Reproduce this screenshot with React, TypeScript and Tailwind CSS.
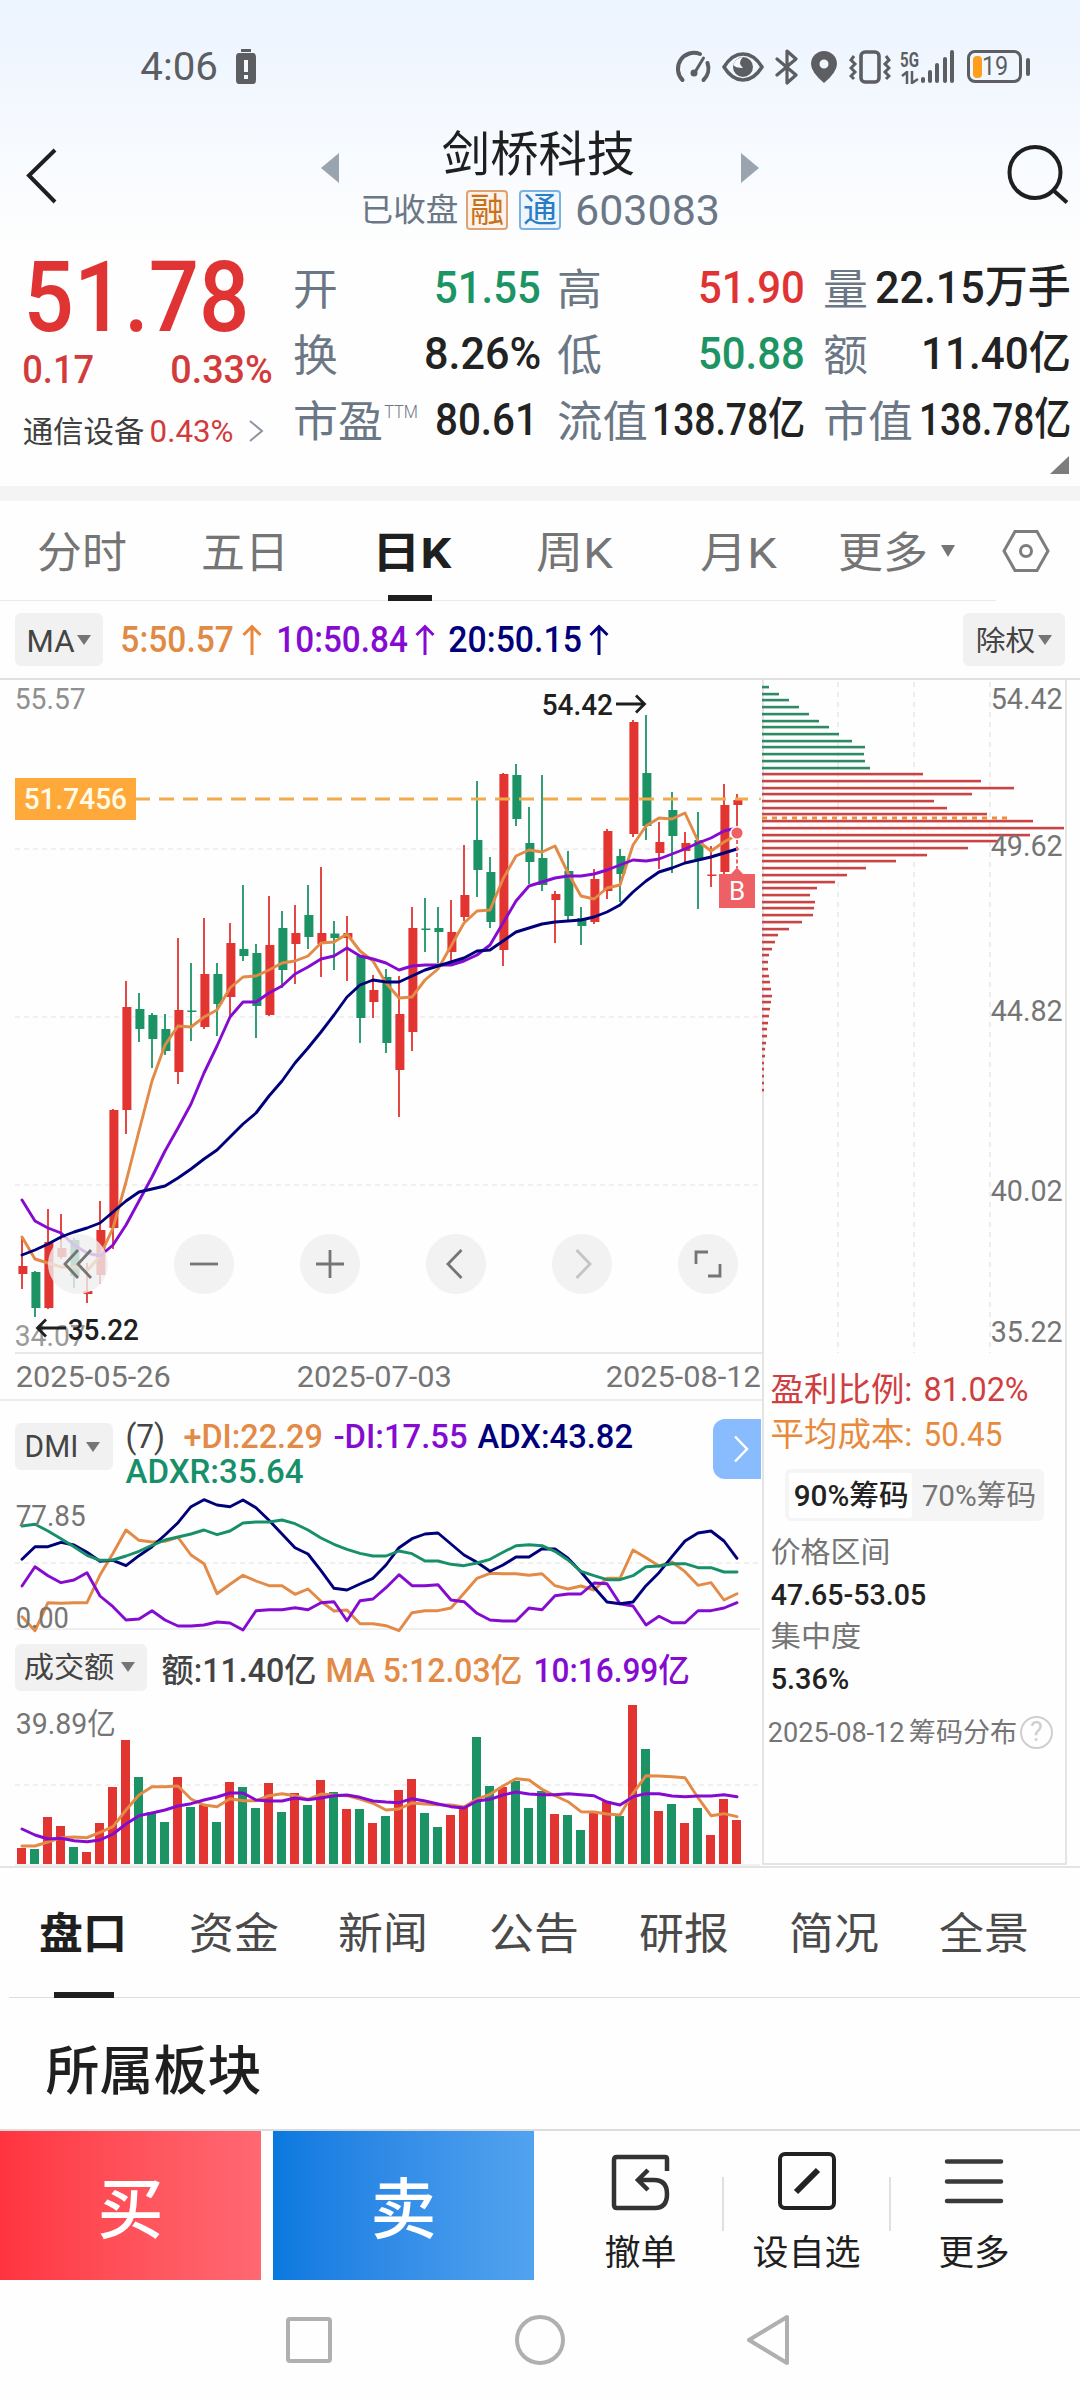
import { useLayoutEffect, useRef, type ReactNode } from "react";

/** Single line of text condensed or widened so that its ink fills the box width given in className. */
function Fit({ className, children }: { className: string; children: ReactNode }) {
  const box = useRef<HTMLSpanElement>(null);
  const ink = useRef<HTMLSpanElement>(null);
  useLayoutEffect(() => {
    if (!box.current || !ink.current) return;
    const size = parseFloat(getComputedStyle(ink.current).fontSize);
    const bearing = size * 0.045;
    const k = (box.current.clientWidth + bearing * 2) / ink.current.offsetWidth;
    ink.current.style.transform = `translateX(${-bearing}px) scaleX(${k})`;
  }, []);
  return (
    <span ref={box} className={"block shrink-0 leading-none whitespace-nowrap " + className}>
      <span ref={ink} className="inline-block origin-left">{children}</span>
    </span>
  );
}

function Caret({ className }: { className: string }) {
  return (
    <svg viewBox="0 0 14 11" preserveAspectRatio="none" className={"shrink-0 " + className}>
      <path d="M0 0H14L7 11Z" fill="#757575" />
    </svg>
  );
}

function StatusBar() {
  return (
    <div className="flex h-[133px] items-center text-[#5c5e62]">
      <Fit className="ml-[142px] w-[74px] pt-[2px] text-[39px]">4:06</Fit>
      <svg viewBox="0 0 22 36" className="ml-[19px] h-9 w-[22px] shrink-0">
        <path d="M6 0H16V3H6ZM4 4H18Q21 4 21 8V31Q21 35 18 35H4Q1 35 1 31V8Q1 4 4 4Z" fill="#5c5e62" />
        <path d="M9 11H13V23H9ZM9 26H13V30H9Z" fill="#f4f8ff" />
      </svg>
      <svg viewBox="0 0 38 36" className="ml-[417px] h-9 w-[38px] shrink-0" fill="none" stroke="#5c5e62" strokeWidth="4" strokeLinecap="round">
        <path d="M8.500 31A16 16 0 0 1 26 5" />
        <path d="M33.500 14A16 16 0 0 1 29.500 31" />
        <path d="M29.500 9L20.500 24" strokeWidth="3" />
        <circle cx="20" cy="24" r="3.500" fill="#5c5e62" stroke="none" />
      </svg>
      <svg viewBox="0 0 42 32" className="ml-[10px] h-8 w-[42px] shrink-0">
        <path d="M2 16Q10 3 21 3T40 16Q32 29 21 29T2 16Z" fill="none" stroke="#5c5e62" strokeWidth="3.500" />
        <circle cx="21" cy="16" r="10" fill="#5c5e62" />
        <path d="M21 6Q15 12 21 17Q13 17 11.500 14Q13 7 21 6Z" fill="#f4f8ff" />
      </svg>
      <svg viewBox="0 0 24 36" className="ml-[11px] h-9 w-6 shrink-0" fill="none" stroke="#5c5e62" strokeWidth="3.200">
        <path d="M2 10L21 26L12 34V2L21 10L2 26" strokeLinejoin="round" strokeLinecap="round" />
      </svg>
      <svg viewBox="0 0 26 32" className="ml-[12px] h-8 w-[26px] shrink-0">
        <path d="M13 0A13 13 0 0 1 26 13Q26 21 13 32Q0 21 0 13A13 13 0 0 1 13 0ZM13 8.500A4.500 4.500 0 1 0 13 17.500A4.500 4.500 0 1 0 13 8.500Z" fill="#5c5e62" />
      </svg>
      <svg viewBox="0 0 42 34" className="ml-3 h-[34px] w-[42px] shrink-0" fill="none" stroke="#5c5e62" strokeWidth="3.600">
        <rect x="12" y="2" width="18" height="30" rx="4" />
        <path d="M5 6L2 10L6 14L2 18L6 22L2 26L5 29M37 6L40 10L36 14L40 18L36 22L40 26L37 29" strokeWidth="3" />
      </svg>
      <div className="ml-[10px] flex h-[34px] w-[20px] flex-col justify-between">
        <Fit className="w-[17px] text-[20px] font-bold">5G</Fit>
        <svg viewBox="0 0 18 13" className="h-[13px] w-[18px]" stroke="#5c5e62" strokeWidth="2.500" fill="none">
          <path d="M1 5L6 1V13M11 0V12L17 8" />
        </svg>
      </div>
      <svg viewBox="0 0 34 34" className="h-[34px] w-[34px] shrink-0" fill="#5c5e62">
        <rect x="0" y="27" width="4" height="6" rx="2" />
        <rect x="7" y="20" width="4" height="13" rx="2" />
        <rect x="14" y="13" width="4" height="20" rx="2" />
        <rect x="22" y="7" width="4" height="26" rx="2" />
        <rect x="29" y="0" width="4" height="33" rx="2" />
      </svg>
      <div className="ml-3 flex h-[33px] w-[55px] items-center rounded-[8px] border-[3.500px] border-[#5c5e62] pl-[3px]">
        <div className="h-[22px] w-[9px] rounded-[4px] bg-[#ff9d1c]" />
        <Fit className="ml-px w-[24px] text-[25px]">19</Fit>
      </div>
      <div className="ml-1 h-[18px] w-[4px] rounded-full bg-[#5c5e62]" />
    </div>
  );
}

function TitleBar() {
  return (
    <div className="flex h-[116px] items-start">
      <svg viewBox="0 0 32 56" className="mt-[15px] ml-[25px] h-14 w-8 shrink-0" fill="none" stroke="#1f1f1f" strokeWidth="4">
        <path d="M30 2L4 27.500L30 54" />
      </svg>
      <svg viewBox="0 0 18 30" className="mt-5 ml-[264px] h-[30px] w-[18px] shrink-0"><path d="M18 0V30L0 15Z" fill="#9aa4ae" /></svg>
      <div className="ml-6 w-[356px]">
        <div className="flex h-[38px] items-center">
          <Fit className="ml-[81px] w-[189px] pt-[5px] text-[48px] text-[#1f1f1f]">剑桥科技</Fit>
        </div>
        <div className="flex h-[78px] items-center text-[#6b7785]">
          <Fit className="-ml-px w-[95px] text-[32px]">已收盘</Fit>
          <span className="ml-[9px] flex h-10 w-[42px] items-center justify-center rounded-[4px] border-2 border-[#dfa274] bg-[#fdf3ea] text-[34px] leading-none text-[#c8711d]">融</span>
          <span className="ml-[11px] flex h-10 w-[42px] items-center justify-center rounded-[4px] border-2 border-[#7db2e0] bg-[#eef6fd] text-[34px] leading-none text-[#2a7cc4]">通</span>
          <Fit className="ml-[16px] w-[141px] text-[43px]">603083</Fit>
        </div>
      </div>
      <svg viewBox="0 0 18 30" className="mt-5 ml-[22px] h-[30px] w-[18px] shrink-0"><path d="M0 0V30L18 15Z" fill="#9aa4ae" /></svg>
      <svg viewBox="0 0 62 60" className="mt-[11px] ml-[248px] h-[60px] w-[62px] shrink-0" fill="none" stroke="#1f1f1f" strokeWidth="4">
        <circle cx="28" cy="28.500" r="25.500" />
        <path d="M46 46L60 58.500" />
      </svg>
    </div>
  );
}

type StatProps = { label: string; labelClass: string; valueClass: string; children: ReactNode; sup?: boolean };
function Stat({ label, labelClass, valueClass, children, sup }: StatProps) {
  return (
    <div className="flex h-[66px] items-center">
      <Fit className={"pt-[7px] text-[43px] text-[#6b7785] " + labelClass}>{label}</Fit>
      {sup && <Fit className="mb-[14px] ml-[4px] w-[32px] text-[18px] font-light text-[#6b7785]">TTM</Fit>}
      <Fit className={"ml-auto pt-px text-[45px] font-medium " + valueClass}>{children}</Fit>
    </div>
  );
}

function Quote() {
  return (
    <section className="relative flex h-[237px]">
      <div className="ml-6 w-[247px] text-[#e03434]">
        <div className="flex h-[95px] items-center"><Fit className="ml-1 w-[217px] pt-[2px] text-[98px] font-medium">51.78</Fit></div>
        <div className="flex h-[50px] items-center justify-between font-medium text-[#d23b3b]">
          <Fit className="w-[68px] pt-[2px] text-[39px]">0.17</Fit>
          <Fit className="w-[99px] pt-[2px] text-[39px]">0.33%</Fit>
        </div>
        <div className="flex h-[73px] items-center">
          <Fit className="w-[119px] pt-[2px] text-[30px] text-[#3f3f3f]">通信设备</Fit>
          <Fit className="ml-2 w-[81px] pt-px text-[31px] text-[#d23b3b]">0.43%</Fit>
          <svg viewBox="0 0 15 22" className="ml-[17px] h-[22px] w-[15px]" fill="none" stroke="#8b96a1" strokeWidth="2"><path d="M1 1L13 11L1 21" /></svg>
        </div>
      </div>
      <div className="mt-[5px] ml-[24px] w-[244px] text-[#222]">
        <Stat label="开" labelClass="w-[41px]" valueClass="w-[103px] text-[#1c9463]">51.55</Stat>
        <Stat label="换" labelClass="w-[41px]" valueClass="w-[113px]">8.26%</Stat>
        <Stat label="市盈" labelClass="w-[86px]" valueClass="mr-[3px] w-[99px]" sup>80.61</Stat>
      </div>
      <div className="mt-[5px] ml-[20px] w-[244px] text-[#222]">
        <Stat label="高" labelClass="w-[41px]" valueClass="w-[103px] text-[#e03434]">51.90</Stat>
        <Stat label="低" labelClass="w-[41px]" valueClass="w-[103px] text-[#1c9463]">50.88</Stat>
        <Stat label="流值" labelClass="w-[87px]" valueClass="w-[149px]">138.78亿</Stat>
      </div>
      <div className="mt-[5px] ml-[22px] w-[244px] text-[#222]">
        <Stat label="量" labelClass="w-[41px]" valueClass="w-[192px]">22.15万手</Stat>
        <Stat label="额" labelClass="w-[41px]" valueClass="w-[146px]">11.40亿</Stat>
        <Stat label="市值" labelClass="w-[86px]" valueClass="w-[148px]">138.78亿</Stat>
      </div>
      <svg viewBox="0 0 19 18" className="absolute right-[11px] bottom-[12px] h-[18px] w-[19px]"><path d="M19 0V18H0Z" fill="#7d7d7d" /></svg>
    </section>
  );
}

function PeriodTabs() {
  return (
    <div className="relative flex h-[100px] items-center text-[43px] text-[#757575]">
      <Fit className="ml-[39px] w-[86px] pt-[5px]">分时</Fit>
      <Fit className="ml-[78px] w-[84px] pt-[5px]">五日</Fit>
      <Fit className="ml-[87px] w-[75px] pt-[5px] font-bold text-[#1f1f1f]">日K</Fit>
      <Fit className="ml-[89px] w-[73px] pt-[5px]">周K</Fit>
      <Fit className="ml-[91px] w-[73px] pt-[5px]">月K</Fit>
      <Fit className="ml-[65px] w-[86px] pt-[5px]">更多</Fit>
      <Caret className="ml-[15px] h-3 w-[14px]" />
      <svg viewBox="0 0 48 44" className="ml-[47px] h-11 w-12 shrink-0" fill="none" stroke="#7d7d7d" strokeWidth="3">
        <path d="M13 2.500H35L46 22L35 41.500H13L2 22Z" />
        <circle cx="24" cy="22" r="5.500" />
      </svg>
      <div className="absolute bottom-0 left-0 h-px w-[996px] bg-[#eaeaea]" />
      <div className="absolute bottom-0 left-[388px] h-[6px] w-[44px] bg-[#1f1f1f]" />
    </div>
  );
}

function UpArrow({ className }: { className: string }) {
  return (
    <svg viewBox="0 0 20 31" className={"h-[31px] w-5 shrink-0 " + className} fill="none" stroke="currentColor" strokeWidth="3">
      <path d="M10 31V3M1.500 11L10 2.500L18.500 11" />
    </svg>
  );
}

function AverageRow() {
  return (
    <div className="flex h-[79px] items-center border-b-2 border-[#e0e0e0] text-[37px] font-medium">
      <div className="ml-[15px] flex h-[53px] w-[88px] items-center rounded-[6px] bg-[#f1f1f1] text-[32px] font-normal text-[#444]">
        <Fit className="ml-[13px] w-[45px] pt-[3px]">MA</Fit>
        <Caret className="ml-1 h-[10px] w-[14px]" />
      </div>
      <Fit className="ml-[19px] w-[110px] text-[#e08a45]">5:50.57</Fit>
      <UpArrow className="ml-[10px] text-[#e9863a]" />
      <Fit className="ml-[16px] w-[128px] text-[#850bd0]">10:50.84</Fit>
      <UpArrow className="ml-[9px] text-[#850bd0]" />
      <Fit className="ml-[15px] w-[130px] text-[#00007a]">20:50.15</Fit>
      <UpArrow className="ml-[9px] text-[#00007a]" />
      <div className="ml-auto mr-[15px] flex h-[53px] w-[102px] items-center rounded-[6px] bg-[#f1f1f1] text-[28px] font-normal text-[#444]">
        <Fit className="ml-[14px] w-[57px] pt-[4px]">除权</Fit>
        <Caret className="ml-1 h-[10px] w-[14px]" />
      </div>
    </div>
  );
}

const RED = "#e23430";
const GREEN = "#1b9364";
const ORANGE = "#e28a46";
const PURPLE = "#850bd0";
const NAVY = "#00007a";
const STEP = 13;
const FIRST = 22;

const linePoints = (values: number[], k = 1, dy = 0) =>
  values.map((v, i) => `${FIRST + i * STEP},${(v * k + dy).toFixed(1)}`).join(" ");

function Line({ values, color, k, dy, width = 2.9 }: { values: number[]; color: string; k?: number; dy?: number; width?: number }) {
  return <polyline points={linePoints(values, k, dy)} fill="none" stroke={color} strokeWidth={width} strokeLinejoin="round" strokeLinecap="round" />;
}

const TREND = "RGRRGRRRRGGGRGRGRGGRGRGRGRGRGRRGGRRGGRGGGRGGRRGRGRGRGRRR";

// high, body top, body bottom, low
const CANDLES = [
  [558, 586, 594, 609], [591, 592, 628, 637], [529, 562, 628, 629], [534, 568, 577, 579], [558, 560, 596, 608], [583, 611, 614, 623], [521, 550, 595, 604],
  [429, 430, 548, 569], [301, 327, 430, 454], [313, 329, 349, 362], [333, 335, 359, 388], [334, 349, 371, 375], [258, 330, 392, 404], [283, 330.5, 332, 361],
  [238, 294, 347, 349], [283, 294, 324, 356], [243, 263, 317, 339], [205, 269, 276, 281], [264, 273, 326, 358], [216, 265, 335, 336], [231, 248, 290, 308],
  [225, 253, 264, 304], [205, 235, 257, 269], [187, 253, 264, 297], [241, 253.5, 258, 290], [236, 253, 258, 301], [275, 276, 338, 363], [295, 310, 322, 338],
  [289, 297, 363, 373], [296, 334, 390, 437], [227, 248, 352, 371], [218, 248.5, 250, 272], [227, 248, 252, 283], [220, 252, 272, 285], [165, 215, 237, 241],
  [101, 160, 190, 217], [177, 192, 242, 248], [93, 94, 270, 286], [84, 95, 139, 146], [127, 163, 182, 204], [95, 178, 205, 211], [211, 214, 220, 263],
  [171, 191, 236, 242], [227, 238, 246, 265], [189, 199, 242, 244], [149, 151, 211, 219], [169, 176, 194, 222], [40, 42, 154, 157], [35, 93, 146, 160],
  [142, 162, 173, 189], [112, 130, 156, 193], [152, 163, 171, 182], [132, 160, 179, 229], [166, 194.5, 196, 207], [104, 125, 192, 200], [114, 120, 125, 146],
];

const MA5 = [557, 579, 583, 587, 587, 591, 576, 548, 502, 451, 401, 365, 346, 347, 337, 330, 308, 297, 296, 290, 283, 281, 276, 263, 262, 254, 271, 281, 303, 318, 317, 300, 289, 266, 243, 231, 230, 199, 176, 170, 172, 166, 193, 216, 219, 208, 205, 165, 146, 138, 139, 133, 161, 171, 162, 155];
const MA10 = [520, 541, 548, 553, 565, 573, 576, 565, 545, 521, 497, 471, 448, 424, 393, 366, 337, 322, 322, 313, 306, 294, 287, 279, 276, 268, 276, 279, 283, 290, 286, 285, 285, 285, 281, 275, 265, 243, 221, 206, 202, 198, 196, 196, 194, 190, 185, 180, 181, 179, 174, 169, 163, 158, 151, 148];
const MA20 = [575, 570, 564, 557, 552, 548, 543, 532, 521, 512, 509, 506, 498, 489, 479, 470, 457, 444, 433, 416, 401, 383, 368, 352, 335, 317, 305, 300, 302, 302, 296, 290, 286, 282, 278, 271, 270, 261, 252, 248, 244, 242, 241, 240, 237, 232, 225, 212, 201, 192, 188, 183, 180, 177, 173, 169];

function ToolButton({ children, dim }: { children: ReactNode; dim?: boolean }) {
  return (
    <div className="flex size-[60px] items-center justify-center rounded-full bg-[#efefef]/80">
      <svg viewBox="0 0 30 30" className="size-[30px]" fill="none" stroke={dim ? "#c4c4c4" : "#757575"} strokeWidth="2.800">{children}</svg>
    </div>
  );
}

function PriceChart() {
  return (
    <div className="relative h-[674px]">
      <svg viewBox="0 0 762 674" className="block h-[674px] w-[762px]">
        <g stroke="#ececec" strokeWidth="1.500" strokeDasharray="5 4">
          <path d="M15 169H760M15 337H760M15 505H760" />
        </g>
        {CANDLES.map(([high, top, bottom, low], i) => {
          const color = TREND[i] === "R" ? RED : GREEN;
          const x = FIRST + i * STEP;
          return (
            <g key={i} fill={color}>
              <rect x={x - 1} y={high} width="2" height={low - high} opacity="0.9" />
              <rect x={x - 3.6} y={top} width="9" height={Math.max(bottom - top, 1.5)} />
            </g>
          );
        })}
        <path d="M136 119H150M159 119H748" stroke="#f0ab4c" strokeWidth="3" strokeDasharray="15 9" />
        <path d="M759 119H761" stroke="#d9c070" strokeWidth="2.500" />
        <Line values={MA5} color={ORANGE} />
        <Line values={MA10} color={PURPLE} />
        <Line values={MA20} color={NAVY} />
        <path d="M737 160V188" stroke="#ee6064" strokeWidth="2" strokeDasharray="4 2.500" />
        <circle cx="737" cy="153" r="6.300" fill="#ee6064" stroke="#fff" strokeWidth="1.500" />
        <path d="M719 194H731L737 187.500L743 194H755V228H719Z" fill="#ee6064" />
        <text x="737" y="220" textAnchor="middle" fontSize="26" fill="#fff">B</text>
        <path d="M616 24H644M636 15.500L644.500 24L636 32.500" fill="none" stroke="#1f1f1f" strokeWidth="2.800" />
        <path d="M15 673H762" stroke="#e8e8e8" strokeWidth="2" />
      </svg>
      <Fit className="absolute top-[4px] left-[16px] w-[68px] text-[30px] text-[#8f8f8f]">55.57</Fit>
      <div className="absolute top-[98px] left-[15px] flex h-[42px] w-[121px] items-center bg-[#ffa93b] text-[#fffbe8]">
        <Fit className="ml-[10px] w-[101px] text-[30px] font-medium">51.7456</Fit>
      </div>
      <Fit className="absolute top-[10px] left-[543px] w-[69px] text-[30px] font-medium text-[#1f1f1f]">54.42</Fit>
      <div className="absolute top-[554px] left-[48px] flex gap-[66px]">
        <ToolButton><path d="M15 1L2 15L15 29M28 1L15 15L28 29" /></ToolButton>
        <ToolButton><path d="M1 15H29" /></ToolButton>
        <ToolButton><path d="M1 15H29M15 1V29" /></ToolButton>
        <ToolButton><path d="M20.500 1L7 15L20.500 29" /></ToolButton>
        <ToolButton dim><path d="M9.500 1L23 15L9.500 29" /></ToolButton>
        <ToolButton><path d="M3 15V3H15M27 15V27H15" /></ToolButton>
      </div>
      <Fit className="absolute top-[641px] left-[16px] w-[68px] text-[30px] text-[#9a9a9a]">34.07</Fit>
      <Fit className="absolute top-[635px] left-[69px] w-[69px] text-[30px] font-medium text-[#1f1f1f]">35.22</Fit>
      <svg viewBox="0 0 32 20" className="absolute top-[638px] left-[35px] h-5 w-8" fill="none" stroke="#1f1f1f" strokeWidth="2.800">
        <path d="M31 10H3M11 1.500L2.500 10L11 18.500" />
      </svg>
    </div>
  );
}

const ADX = [478, 440, 440, 427, 435, 457, 484, 481, 497, 467, 440, 405, 368, 320, 299, 315, 320, 300, 323, 361, 402, 443, 462, 512, 565, 570, 552, 535, 495, 443, 416, 402, 399, 432, 465, 487, 514, 495, 471, 471, 446, 447, 475, 516, 562, 606, 611, 606, 557, 518, 470, 423, 399, 393, 423, 475];
const ADXR = [378, 373, 393, 416, 440, 466, 481, 480, 468, 454, 436, 420, 411, 402, 390, 404, 393, 369, 366, 366, 360, 371, 390, 414, 433, 448, 460, 468, 468, 453, 461, 483, 483, 493, 497, 489, 478, 457, 437, 434, 437, 454, 480, 514, 527, 539, 539, 527, 500, 498, 491, 491, 503, 503, 516, 516];
const PLUS_DI = [650, 692, 608, 610, 608, 608, 525, 460, 390, 421, 426, 424, 412, 465, 491, 581, 553, 526, 543, 557, 557, 583, 567, 604, 633, 630, 671, 671, 677, 692, 638, 632, 632, 624, 580, 535, 520, 521, 521, 526, 521, 557, 567, 558, 570, 535, 535, 450, 473, 498, 486, 515, 556, 548, 600, 581];
const MINUS_DI = [558, 500, 527, 548, 540, 518, 588, 620, 660, 657, 632, 660, 678, 678, 675, 666, 669, 690, 632, 629, 629, 623, 629, 608, 605, 662, 602, 597, 563, 524, 557, 557, 554, 600, 605, 640, 660, 663, 663, 624, 629, 587, 582, 582, 549, 551, 611, 618, 675, 649, 668, 668, 632, 632, 624, 608];

function Dmi() {
  return (
    <>
      <div className="flex h-[86px] text-[34px] font-medium">
        <div className="mt-[22px] ml-[15px] flex h-[47px] w-[98px] items-center rounded-[6px] bg-[#f1f1f1] text-[31px] font-normal text-[#444]">
          <Fit className="ml-[11px] w-[51px]">DMI</Fit>
          <Caret className="ml-[9px] h-[10px] w-[14px]" />
        </div>
        <div className="mt-[17px] ml-[14px] w-[507px]">
          <div className="flex h-[35px] items-center">
            <Fit className="w-[37px] font-normal text-[#444]">(7)</Fit>
            <Fit className="ml-[21px] w-[136px] text-[#e28a46]">+DI:22.29</Fit>
            <Fit className="ml-[14px] w-[131px] text-[#850bd0]">-DI:17.55</Fit>
            <Fit className="ml-[13px] w-[153px] text-[#00007a]">ADX:43.82</Fit>
          </div>
          <div className="flex h-[35px] items-center">
            <Fit className="w-[175px] text-[#17906a]">ADXR:35.64</Fit>
          </div>
        </div>
        <div className="mt-[18px] mr-px ml-auto flex h-[60px] w-[48px] items-center justify-center rounded-l-[12px] bg-[#89bbff] pl-2">
          <svg viewBox="0 0 16 28" className="h-7 w-4" fill="none" stroke="#fff" strokeWidth="2.500"><path d="M2 1.500L14 14L2 26.500" /></svg>
        </div>
      </div>
      <div className="relative h-[146px]">
        <svg viewBox="0 0 762 146" className="block h-[146px] w-[762px]">
          <path d="M15 76H760" stroke="#ececec" strokeWidth="1.500" strokeDasharray="5 4" />
          <path d="M15 142H760" stroke="#e8e8e8" strokeWidth="1.500" />
          <Line values={PLUS_DI} color={ORANGE} k={1 / 3} dy={-87} />
          <Line values={MINUS_DI} color={PURPLE} k={1 / 3} dy={-87} />
          <Line values={ADX} color={NAVY} k={1 / 3} dy={-87} />
          <Line values={ADXR} color="#17906a" k={1 / 3} dy={-87} />
        </svg>
        <Fit className="absolute top-[14px] left-[17px] w-[67px] text-[30px] text-[#757575]">77.85</Fit>
        <Fit className="absolute top-[116px] left-[17px] w-[51px] text-[30px] text-[#757575]">0.00</Fit>
      </div>
    </>
  );
}

const VOLUME = [48, 45, 141, 114, 51, 36, 123, 231, 372, 261, 156, 126, 261, 171, 178, 126, 246, 231, 168, 243, 156, 213, 177, 252, 216, 165, 165, 123, 144, 222, 255, 153, 111, 147, 171, 381, 234, 231, 249, 168, 219, 150, 147, 102, 156, 189, 144, 477, 345, 159, 180, 123, 168, 87, 195, 132];
const VOL_MA5 = [648, 648, 636, 623, 621, 623, 607, 590, 540, 495, 470, 470, 468, 507, 525, 530, 506, 512, 512, 497, 491, 497, 508, 492, 495, 497, 507, 520, 540, 537, 519, 522, 524, 525, 531, 507, 493, 468, 446, 450, 478, 497, 515, 545, 546, 552, 555, 490, 437, 438, 440, 443, 503, 557, 551, 560];
const VOL_MA10 = [597, 615, 627, 625, 632, 635, 630, 612, 582, 557, 549, 540, 528, 521, 510, 501, 489, 489, 510, 513, 513, 504, 509, 504, 497, 495, 502, 513, 516, 518, 506, 513, 522, 530, 534, 513, 508, 495, 486, 492, 494, 494, 491, 494, 497, 516, 525, 500, 491, 491, 498, 500, 498, 498, 494, 500];

function Volume() {
  return (
    <>
      <div className="flex h-[68px] items-center text-[33px] font-medium">
        <div className="ml-[15px] flex h-[47px] w-[132px] items-center rounded-[6px] bg-[#f1f1f1] text-[29px] font-normal text-[#444]">
          <Fit className="ml-[10px] w-[88px] pt-[2px]">成交额</Fit>
          <Caret className="ml-[8px] h-[10px] w-[14px]" />
        </div>
        <Fit className="ml-4 w-[152px] pt-[7px] text-[#444]">额:11.40亿</Fit>
        <Fit className="ml-[12px] w-[194px] pt-[7px] text-[#e28a46]">MA 5:12.03亿</Fit>
        <Fit className="ml-[14px] w-[153px] pt-[7px] text-[#850bd0]">10:16.99亿</Fit>
      </div>
      <div className="relative h-[166px]">
        <svg viewBox="0 0 762 166" className="block h-[166px] w-[762px]">
          <path d="M15 84H760" stroke="#ececec" strokeWidth="1.500" strokeDasharray="5 4" />
          {VOLUME.map((v, i) => (
            <rect key={i} x={FIRST - 5 + i * STEP} y={163 - v / 3} width="9" height={v / 3} fill={TREND[i] === "R" ? RED : GREEN} />
          ))}
          <path d="M15 164H760" stroke="#ececec" strokeWidth="1.500" />
          <Line values={VOL_MA5} color={ORANGE} k={1 / 3} dy={-71} />
          <Line values={VOL_MA10} color={PURPLE} k={1 / 3} dy={-71} />
        </svg>
        <Fit className="absolute top-[8px] left-[17px] w-[97px] text-[30px] text-[#757575]">39.89亿</Fit>
      </div>
    </>
  );
}

const CHIPS = [7, 17, 27, 37, 47, 57, 67, 77, 90, 103, 102, 103, 108, 161, 219, 252, 210, 172, 185, 225, 271, 302, 268, 236, 206, 165, 134, 104, 85, 73, 55, 48, 53, 52, 51, 40, 27, 16, 13, 10, 7, 6, 6, 7, 8, 9, 10, 9, 8, 7, 6, 5, 5, 4, 3, 3, 2, 2, 2, 2, 2];

function ChipPanel() {
  return (
    <div className="h-[1185px] w-[305px] border-2 border-t-0 border-[#e4e4e4]">
      <div className="relative h-[674px]">
        <svg viewBox="0 0 303 674" className="absolute top-0 -left-[2px] h-[674px] w-[303px] overflow-visible">
          <path d="M76 2V673M152 2V673M228 2V673" stroke="#ececec" strokeWidth="1.800" strokeDasharray="5 5" />
          {CHIPS.map((w, i) => (
            <rect key={i} x="0" y={Math.round(7 + i * 6.71) - 1.2} width={w} height="2.600" fill={i < 13 ? "#2d8a64" : "#c94444"} />
          ))}
          <path d="M0 138H245" stroke="#f08a3c" strokeWidth="3" strokeDasharray="5 5" />
        </svg>
        <div className="absolute right-1 w-[69px] text-[30px] text-[#757575]">
          <Fit className="absolute top-[4px] w-[69px]">54.42</Fit>
          <Fit className="absolute top-[151px] w-[69px]">49.62</Fit>
          <Fit className="absolute top-[316px] w-[69px]">44.82</Fit>
          <Fit className="absolute top-[496px] w-[69px]">40.02</Fit>
          <Fit className="absolute top-[637px] w-[69px]">35.22</Fit>
        </div>
      </div>
      <div className="pt-[12px] pl-[8px] text-[29px] text-[#757575]">
        <div className="flex h-[46px] items-center text-[33px] text-[#cf3f3f]">
          <Fit className="w-[139px]">盈利比例:</Fit>
          <Fit className="ml-[14px] w-[102px]">81.02%</Fit>
        </div>
        <div className="flex h-[45px] items-center text-[33px] text-[#e88a3c]">
          <Fit className="w-[139px]">平均成本:</Fit>
          <Fit className="ml-[14px] w-[76px]">50.45</Fit>
        </div>
        <div className="mt-[12px] ml-[13px] flex h-[52px] w-[259px] items-center rounded-[6px] bg-[#f5f5f5] pl-[4px]">
          <div className="flex h-[45px] w-[123px] items-center rounded-[3px] bg-white pl-[6px] font-medium text-[#222]"><Fit className="w-[112px] pt-[2px]">90%筹码</Fit></div>
          <Fit className="ml-[11px] w-[112px] pt-[2px]">70%筹码</Fit>
        </div>
        <div className="mt-[11px] flex h-[42px] items-center"><Fit className="w-[117px]">价格区间</Fit></div>
        <div className="flex h-[42px] items-center font-medium text-[#222]"><Fit className="w-[153px]">47.65-53.05</Fit></div>
        <div className="flex h-[42px] items-center"><Fit className="w-[88px]">集中度</Fit></div>
        <div className="flex h-[42px] items-center font-medium text-[#222]"><Fit className="w-[76px]">5.36%</Fit></div>
        <div className="mt-[12px] -ml-[3px] flex h-[42px] items-center text-[27px]">
          <Fit className="w-[134px]">2025-08-12</Fit>
          <Fit className="ml-[7px] w-[106px]">筹码分布</Fit>
          <span className="mb-[2px] ml-[4px] flex size-[33px] items-center justify-center rounded-full border-2 border-[#cfcfcf] text-[27px] leading-none text-[#cfcfcf]">?</span>
        </div>
      </div>
    </div>
  );
}

function Charts() {
  return (
    <div className="flex h-[1188px] border-b-2 border-[#e4e4e4]">
      <div className="w-[762px] shrink-0">
        <PriceChart />
        <div className="flex h-[47px] items-center border-b-2 border-[#ececec] pl-[17px] text-[30px] text-[#757575]">
          <Fit className="w-[152px]">2025-05-26</Fit>
          <Fit className="ml-[129px] w-[152px]">2025-07-03</Fit>
          <Fit className="ml-[157px] w-[152px]">2025-08-12</Fit>
        </div>
        <Dmi />
        <Volume />
      </div>
      <ChipPanel />
    </div>
  );
}

function DetailTabs() {
  return (
    <div className="relative flex h-[130px] items-center text-[43px] text-[#4a4a4a]">
      <Fit className="ml-[41px] w-[84px] pt-[2px] font-bold text-[#1f1f1f]">盘口</Fit>
      <Fit className="ml-[66px] w-[86px] pt-[2px]">资金</Fit>
      <Fit className="ml-[63px] w-[86px] pt-[2px]">新闻</Fit>
      <Fit className="ml-[65px] w-[86px] pt-[2px]">公告</Fit>
      <Fit className="ml-[64px] w-[86px] pt-[2px]">研报</Fit>
      <Fit className="ml-[64px] w-[86px] pt-[2px]">简况</Fit>
      <Fit className="ml-[64px] w-[86px] pt-[2px]">全景</Fit>
      <div className="absolute right-0 bottom-0 left-[9px] h-px bg-[#dedede]" />
      <div className="absolute bottom-0 left-[54px] h-[6px] w-[60px] bg-[#1f1f1f]" />
    </div>
  );
}

function ActionBar() {
  return (
    <div className="flex h-[151px] border-t-2 border-[#dcdcdc] text-[35px] text-[#1f1f1f]">
      <button className="flex w-[261px] items-center justify-center bg-linear-to-r from-[#ff3340] to-[#ff6872] pt-[11px] text-[66px] leading-none font-medium text-white">买</button>
      <button className="ml-3 flex w-[261px] items-center justify-center bg-linear-to-r from-[#0878df] to-[#52a3ef] pt-[11px] text-[66px] leading-none font-medium text-white">卖</button>
      <div className="flex w-[188px] flex-col items-center pl-[24px]">
        <svg viewBox="0 0 60 60" className="mt-5 size-[60px]" fill="none" stroke="#333" strokeWidth="4.500">
          <path d="M57 20V8Q57 6 55 6H7Q4 6 4 9V54Q4 57 7 57H45Q57 57 57 43T44 29H29" strokeLinejoin="round" />
          <path d="M38 19L28 29L38 39" />
        </svg>
        <Fit className="mt-[25px] w-[69px]">撤单</Fit>
      </div>
      <div className="mt-[46px] h-[54px] w-[2px] bg-[#e0e0e0]" />
      <div className="flex w-[165px] flex-col items-center">
        <svg viewBox="0 0 60 60" className="mt-[20px] size-[60px]" fill="none" stroke="#222" strokeWidth="4">
          <rect x="3" y="3" width="54" height="54" rx="5" />
          <path d="M19 41L41 19" strokeWidth="6" />
        </svg>
        <Fit className="mt-[25px] w-[105px]">设自选</Fit>
      </div>
      <div className="mt-[46px] h-[54px] w-[2px] bg-[#e0e0e0]" />
      <div className="flex w-[165px] flex-col items-center">
        <svg viewBox="0 0 60 60" className="mt-[21px] size-[60px]" fill="none" stroke="#3a3a3a" strokeWidth="4.500" strokeLinecap="round">
          <path d="M3 9.500H57M3 29.500H57M3 49H57" />
        </svg>
        <Fit className="mt-[24px] w-[68px]">更多</Fit>
      </div>
    </div>
  );
}

function SystemNav() {
  return (
    <div className="flex h-[120px] items-center">
      <div className="ml-[286px] size-[46px] rounded-[4px] border-4 border-[#b0b0b0]" />
      <div className="ml-[183px] size-[50px] rounded-full border-4 border-[#b0b0b0]" />
      <svg viewBox="0 0 44 52" className="ml-[181px] h-[52px] w-11" fill="none" stroke="#b0b0b0" strokeWidth="4" strokeLinejoin="round">
        <path d="M41 3V49L3 26Z" />
      </svg>
    </div>
  );
}

export default function App() {
  return (
    <div className="h-[2400px] w-[1080px] overflow-hidden bg-[#fefefe] font-[Roboto,'Noto_Sans_CJK_SC',sans-serif]">
      <header className="bg-linear-to-b from-[#ecf4ff] to-[#fefefe]">
        <StatusBar />
        <TitleBar />
      </header>
      <Quote />
      <div className="h-[15px] bg-[#f4f4f4]" />
      <PeriodTabs />
      <AverageRow />
      <Charts />
      <DetailTabs />
      <div className="flex h-[131px] items-center pt-[18px]">
        <Fit className="ml-[48px] w-[211px] text-[53px] font-medium text-[#1f1f1f]">所属板块</Fit>
      </div>
      <ActionBar />
      <SystemNav />
    </div>
  );
}
